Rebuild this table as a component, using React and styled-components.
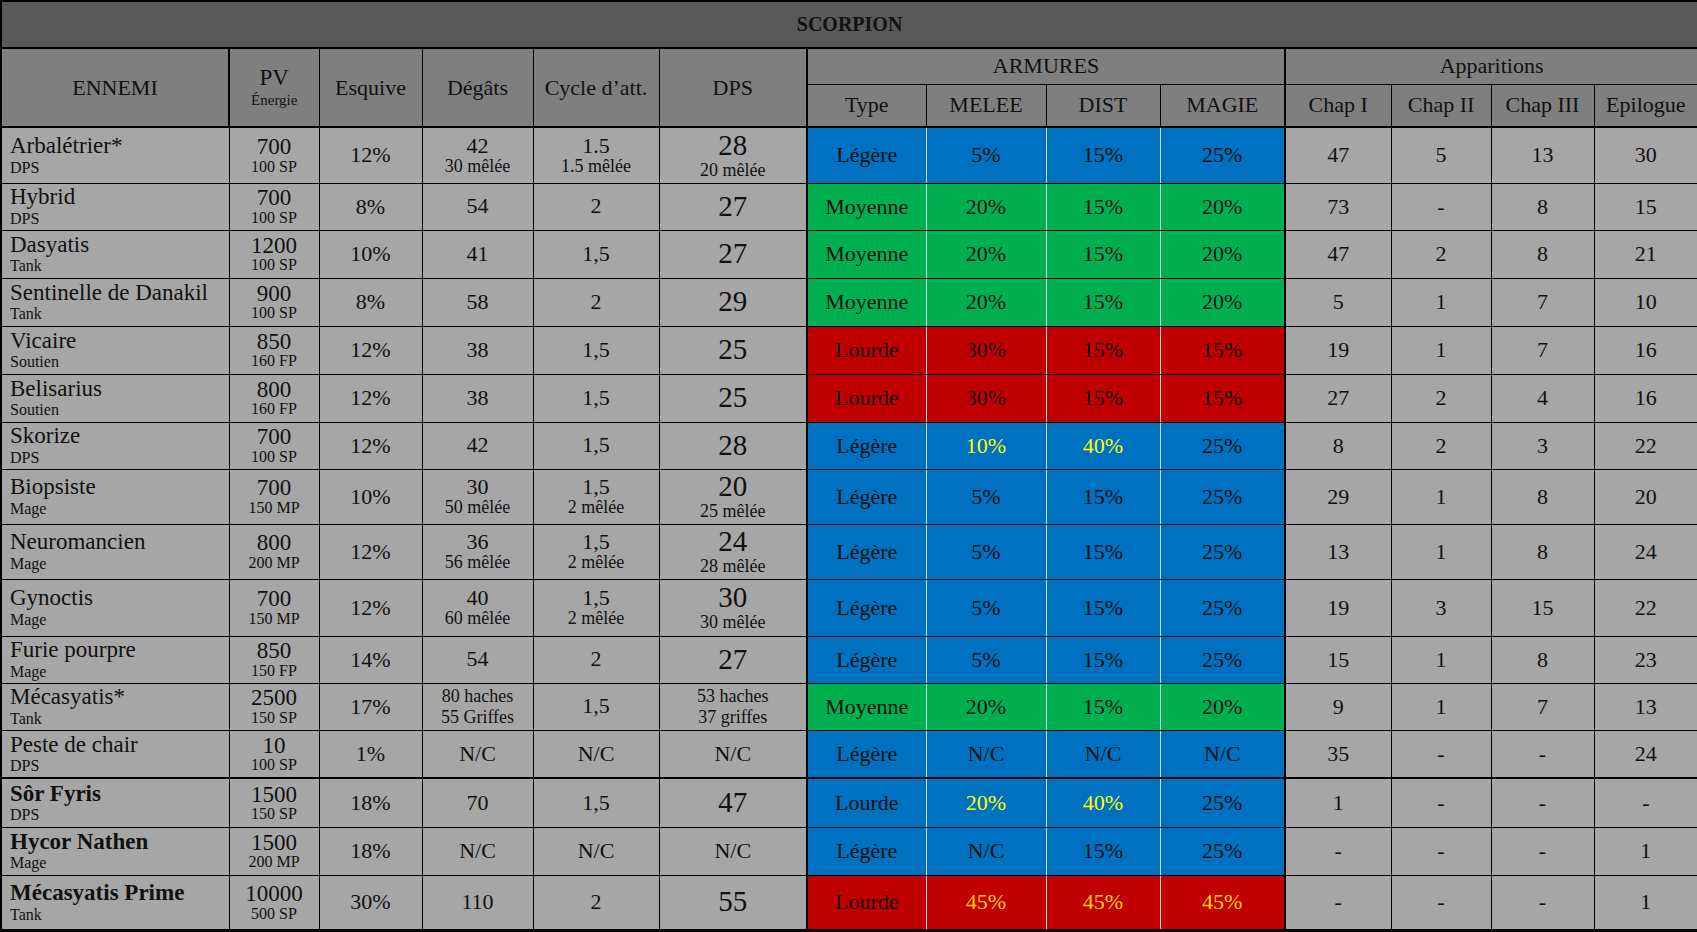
import React from "react"
import styled, { createGlobalStyle } from "styled-components"

const Global = createGlobalStyle`
    html, body {
        margin: 0;
        padding: 0;
        background: #000;
    }
    body {
        font-family: "Liberation Serif", "Times New Roman", serif;
        color: #111;
    }
`

const FILLS = {
    title: "#595959",
    head: "#7f7f7f",
    data: "#a6a6a6",
    blue: "#0070c0",
    green: "#00b050",
    red: "#c00000",
}

const HIGHLIGHT = {
    blue: "#ffff00",
    red: "#ffd200",
}

const Table = styled.table`
    width: 1697px;
    table-layout: fixed;
    border-collapse: collapse;
    border: 2px solid #000;
`

const Row = styled.tr`
    height: ${p => p.$h}px;
`

const Cell = styled.td`
    background: ${p => FILLS[p.$fill || "data"]};
    border: 1px solid #000;
    border-left: ${p => p.$thick ? "2px solid #000" : p.$armor ? "1px solid #cfdce9" : "1px solid #000"};
    border-right: ${p => p.$armor ? "1px solid #cfdce9" : "1px solid #000"};
    border-top-width: ${p => p.$cut ? 2 : 1}px;
    padding: 0;
    text-align: center;
    vertical-align: middle;
    font-size: ${p => p.$size || 22}px;
    line-height: 1;
    color: ${p => p.$ink || "#111"};
    white-space: nowrap;
`

const Head = styled.th`
    background: ${FILLS.head};
    border: 1px solid #000;
    border-left: ${p => p.$thick ? "2px solid #000" : "1px solid #000"};
    border-bottom-width: ${p => p.$bottom ? 2 : 1}px;
    padding: 0;
    font-weight: normal;
    font-size: 22px;
    line-height: 1;
    color: #111;
    text-align: center;
    vertical-align: middle;
    white-space: nowrap;
`

const Title = styled.th`
    background: ${FILLS.title};
    border-bottom: 2px solid #000;
    padding: 0;
    font-size: 20px;
    font-weight: bold;
    color: #111;
    text-align: center;
    vertical-align: middle;
`

const NameCell = styled(Cell)`
    text-align: left;
    padding-left: 8px;
`

const Main = styled.div`
    font-size: ${p => p.$size || 22}px;
    font-weight: ${p => p.$bold ? "bold" : "normal"};
    line-height: 1.02;
`

const Sub = styled.div`
    font-size: ${p => p.$size || 16}px;
    line-height: 1.05;
    margin-top: ${p => p.$gap || 0}px;
`

const COLS = [228, 90, 103, 111, 126, 148, 119, 120, 114, 125, 106, 100, 103, 104]

const ROWS = [
    { name: "Arbalétrier*", role: "DPS", h: 56, pv: ["700", "100 SP"], dodge: "12%", dmg: ["42", "30 mêlée"], cycle: ["1.5", "1.5 mêlée"], dps: ["28", "20 mêlée"], fill: "blue", type: "Légère", res: ["5%", "15%", "25%"], chap: ["47", "5", "13", "30"] },
    { name: "Hybrid", role: "DPS", h: 47, pv: ["700", "100 SP"], dodge: "8%", dmg: ["54"], cycle: ["2"], dps: ["27"], fill: "green", type: "Moyenne", res: ["20%", "15%", "20%"], chap: ["73", "-", "8", "15"] },
    { name: "Dasyatis", role: "Tank", h: 48, pv: ["1200", "100 SP"], dodge: "10%", dmg: ["41"], cycle: ["1,5"], dps: ["27"], fill: "green", type: "Moyenne", res: ["20%", "15%", "20%"], chap: ["47", "2", "8", "21"] },
    { name: "Sentinelle de Danakil", role: "Tank", h: 48, pv: ["900", "100 SP"], dodge: "8%", dmg: ["58"], cycle: ["2"], dps: ["29"], fill: "green", type: "Moyenne", res: ["20%", "15%", "20%"], chap: ["5", "1", "7", "10"] },
    { name: "Vicaire", role: "Soutien", h: 48, pv: ["850", "160 FP"], dodge: "12%", dmg: ["38"], cycle: ["1,5"], dps: ["25"], fill: "red", type: "Lourde", res: ["30%", "15%", "15%"], chap: ["19", "1", "7", "16"] },
    { name: "Belisarius", role: "Soutien", h: 48, pv: ["800", "160 FP"], dodge: "12%", dmg: ["38"], cycle: ["1,5"], dps: ["25"], fill: "red", type: "Lourde", res: ["30%", "15%", "15%"], chap: ["27", "2", "4", "16"] },
    { name: "Skorize", role: "DPS", h: 47, pv: ["700", "100 SP"], dodge: "12%", dmg: ["42"], cycle: ["1,5"], dps: ["28"], fill: "blue", type: "Légère", res: ["10%", "40%", "25%"], hl: [0, 1], chap: ["8", "2", "3", "22"] },
    { name: "Biopsiste", role: "Mage", h: 55, pv: ["700", "150 MP"], dodge: "10%", dmg: ["30", "50 mêlée"], cycle: ["1,5", "2 mêlée"], dps: ["20", "25 mêlée"], fill: "blue", type: "Légère", res: ["5%", "15%", "25%"], chap: ["29", "1", "8", "20"] },
    { name: "Neuromancien", role: "Mage", h: 55, pv: ["800", "200 MP"], dodge: "12%", dmg: ["36", "56 mêlée"], cycle: ["1,5", "2 mêlée"], dps: ["24", "28 mêlée"], fill: "blue", type: "Légère", res: ["5%", "15%", "25%"], chap: ["13", "1", "8", "24"] },
    { name: "Gynoctis", role: "Mage", h: 57, pv: ["700", "150 MP"], dodge: "12%", dmg: ["40", "60 mêlée"], cycle: ["1,5", "2 mêlée"], dps: ["30", "30 mêlée"], fill: "blue", type: "Légère", res: ["5%", "15%", "25%"], chap: ["19", "3", "15", "22"] },
    { name: "Furie pourpre", role: "Mage", h: 47, pv: ["850", "150 FP"], dodge: "14%", dmg: ["54"], cycle: ["2"], dps: ["27"], fill: "blue", type: "Légère", res: ["5%", "15%", "25%"], chap: ["15", "1", "8", "23"] },
    { name: "Mécasyatis*", role: "Tank", h: 47, pv: ["2500", "150 SP"], dodge: "17%", dmg: ["80 haches", "55 Griffes"], pair: true, cycle: ["1,5"], dps: ["53 haches", "37 griffes"], fill: "green", type: "Moyenne", res: ["20%", "15%", "20%"], chap: ["9", "1", "7", "13"] },
    { name: "Peste de chair", role: "DPS", h: 48, pv: ["10", "100 SP"], dodge: "1%", dmg: ["N/C"], cycle: ["N/C"], dps: ["N/C"], fill: "blue", type: "Légère", res: ["N/C", "N/C", "N/C"], chap: ["35", "-", "-", "24"] },
    { name: "Sôr Fyris", role: "DPS", h: 49, boss: true, cut: true, pv: ["1500", "150 SP"], dodge: "18%", dmg: ["70"], cycle: ["1,5"], dps: ["47"], fill: "blue", type: "Lourde", res: ["20%", "40%", "25%"], hl: [0, 1], chap: ["1", "-", "-", "-"] },
    { name: "Hycor Nathen", role: "Mage", h: 48, boss: true, pv: ["1500", "200 MP"], dodge: "18%", dmg: ["N/C"], cycle: ["N/C"], dps: ["N/C"], fill: "blue", type: "Légère", res: ["N/C", "15%", "25%"], chap: ["-", "-", "-", "1"] },
    { name: "Mécasyatis Prime", role: "Tank", h: 55, boss: true, pv: ["10000", "500 SP"], dodge: "30%", dmg: ["110"], cycle: ["2"], dps: ["55"], fill: "red", type: "Lourde", res: ["45%", "45%", "45%"], hl: [0, 1, 2], chap: ["-", "-", "-", "1"] },
]

function Stat ({ lines, size, sub, pair, cut }) {
    if (pair) {
        return (
            <Cell $cut={cut}>
                <Sub $size={18}>{lines[0]}</Sub>
                <Sub $size={18} $gap={2}>{lines[1]}</Sub>
            </Cell>
        )
    }
    // "N/C" keeps the plain value size, even in the big DPS column
    const main = lines[0] === "N/C" ? 22 : size
    return (
        <Cell $cut={cut}>
            <Main $size={main}>{lines[0]}</Main>
            {lines[1] && <Sub $size={sub}>{lines[1]}</Sub>}
        </Cell>
    )
}

function EnemyRow ({ row }) {
    const hl = row.hl || []
    return (
        <Row $h={row.h}>
            <NameCell $cut={row.cut}>
                <Main $size={23} $bold={row.boss}>{row.name}</Main>
                <Sub $gap={2}>{row.role}</Sub>
            </NameCell>
            <Stat lines={row.pv} size={23} sub={16} cut={row.cut} />
            <Cell $cut={row.cut}>{row.dodge}</Cell>
            <Stat lines={row.dmg} sub={18} pair={row.pair} cut={row.cut} />
            <Stat lines={row.cycle} sub={18} cut={row.cut} />
            <Stat lines={row.dps} size={29} sub={18} pair={row.pair} cut={row.cut} />
            <Cell $fill={row.fill} $thick $armor $cut={row.cut}>{row.type}</Cell>
            {row.res.map((v, i) => (
                <Cell key={i} $fill={row.fill} $armor $cut={row.cut}
                    $ink={hl.includes(i) ? HIGHLIGHT[row.fill] : undefined}>
                    {v}
                </Cell>
            ))}
            {row.chap.map((v, i) => (
                <Cell key={i} $thick={i === 0} $cut={row.cut}>{v}</Cell>
            ))}
        </Row>
    )
}

export default function App () {
    return (
        <>
            <Global />
            <Table>
                <colgroup>
                    {COLS.map((w, i) => <col key={i} style={{ width: w }} />)}
                </colgroup>
                <thead>
                    <Row $h={47}>
                        <Title colSpan={14}>SCORPION</Title>
                    </Row>
                    <Row $h={36}>
                        <Head rowSpan={2} $bottom>ENNEMI</Head>
                        <Head rowSpan={2} $bottom $thick>
                            <Main $size={23}>PV</Main>
                            <Sub $size={15} $gap={3}>Énergie</Sub>
                        </Head>
                        <Head rowSpan={2} $bottom>Esquive</Head>
                        <Head rowSpan={2} $bottom>Dégâts</Head>
                        <Head rowSpan={2} $bottom>Cycle d’att.</Head>
                        <Head rowSpan={2} $bottom>DPS</Head>
                        <Head colSpan={4} $thick>ARMURES</Head>
                        <Head colSpan={4} $thick>Apparitions</Head>
                    </Row>
                    <Row $h={43}>
                        <Head $bottom $thick>Type</Head>
                        <Head $bottom>MELEE</Head>
                        <Head $bottom>DIST</Head>
                        <Head $bottom>MAGIE</Head>
                        <Head $bottom $thick>Chap I</Head>
                        <Head $bottom>Chap II</Head>
                        <Head $bottom>Chap III</Head>
                        <Head $bottom>Epilogue</Head>
                    </Row>
                </thead>
                <tbody>
                    {ROWS.map(r => <EnemyRow key={r.name} row={r} />)}
                </tbody>
            </Table>
        </>
    )
}
